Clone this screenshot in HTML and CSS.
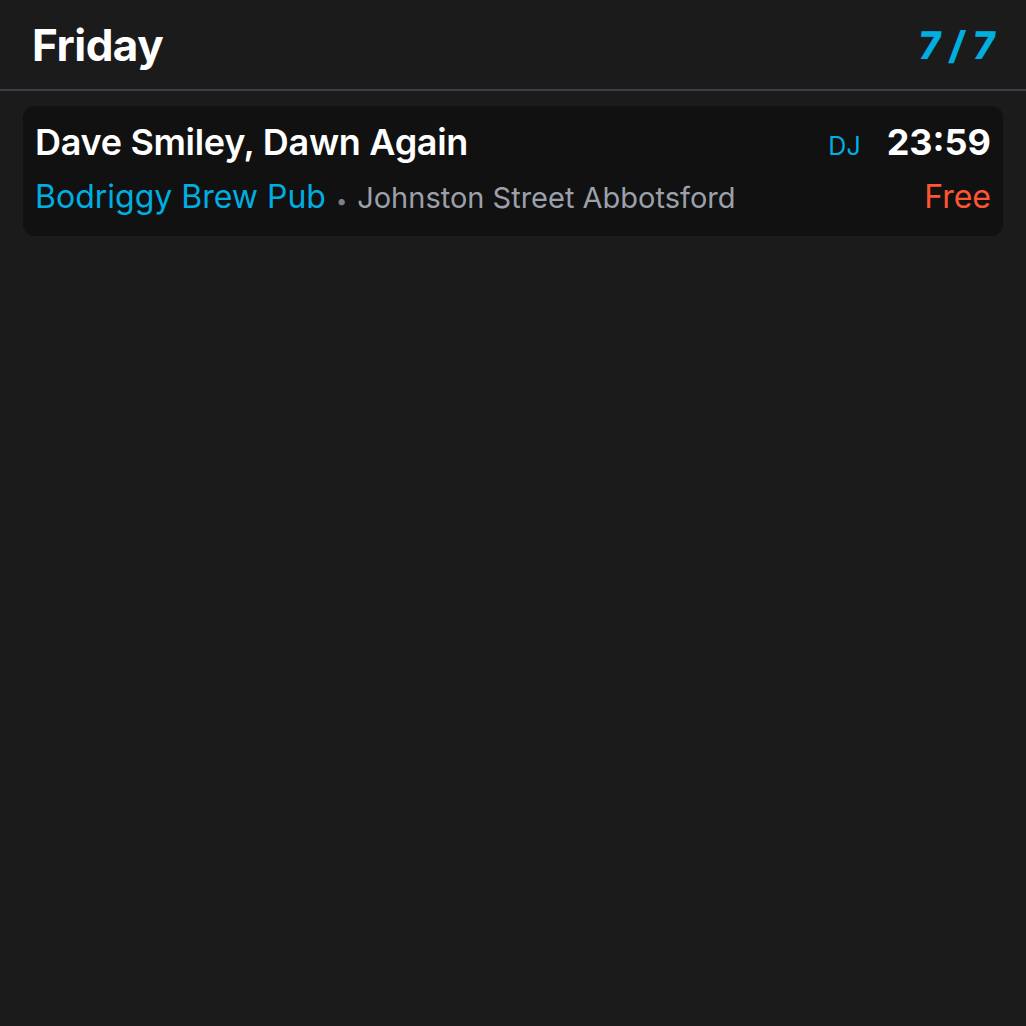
FILE: index.html
```html
<!DOCTYPE html>
<html>
<head>
<meta charset="utf-8">
<link rel="stylesheet" href="styles.css">
</head>
<body>
<div class="page">
  <header class="header">
    <h1 class="day">Friday</h1>
    <div class="count">7 / 7</div>
  </header>
  <div class="list">
    <div class="card">
      <div class="row">
        <div class="title">Dave Smiley, Dawn Again</div>
        <div class="right">
          <span class="genre">DJ</span>
          <span class="time">23:59</span>
        </div>
      </div>
      <div class="row">
        <div class="place"><span class="venue">Bodriggy Brew Pub</span><span class="dot">•</span><span class="addr">Johnston Street Abbotsford</span></div>
        <div class="price">Free</div>
      </div>
    </div>
  </div>
</div>
</body>
</html>
```
FILE: styles.css
```css
html, body {
  margin: 0;
  padding: 0;
  background: #1b1b1b;
  height: 100%;
}
body {
  font-family: Inter, "Noto Sans", sans-serif;
  color: #ffffff;
}
.header {
  display: flex;
  justify-content: space-between;
  align-items: center;
  padding: 0 30px 0 32px;
  height: 89px;
  border-bottom: 2px solid #3a3f49;
}
.day {
  margin: 0;
  font-size: 44px;
  font-weight: 700;
  letter-spacing: -0.5px;
}
.count {
  font-size: 38px;
  font-weight: 800;
  color: #00aee0;
  transform: skewX(-6deg);
}
.list {
  padding: 15px 23px;
}
.card {
  background: #111111;
  border-radius: 12px;
  padding: 14px 12px 20px 12px;
  display: flex;
  flex-direction: column;
  gap: 13px;
}
.row {
  display: flex;
  justify-content: space-between;
  align-items: baseline;
}
.title {
  font-size: 36px;
  font-weight: 600;
  letter-spacing: -0.3px;
}
.right {
  display: flex;
  align-items: baseline;
  gap: 26px;
}
.genre {
  font-size: 25px;
  color: #00aee0;
}
.time {
  font-size: 36px;
  font-weight: 700;
}
.place {
  display: flex;
  align-items: baseline;
}
.venue {
  font-size: 32px;
  color: #00aee0;
}
.dot {
  font-size: 20px;
  color: #7b808a;
  margin: 0 10px;
}
.addr {
  font-size: 29px;
  color: #9ca0aa;
}
.price {
  font-size: 32px;
  color: #ff5533;
}
```
